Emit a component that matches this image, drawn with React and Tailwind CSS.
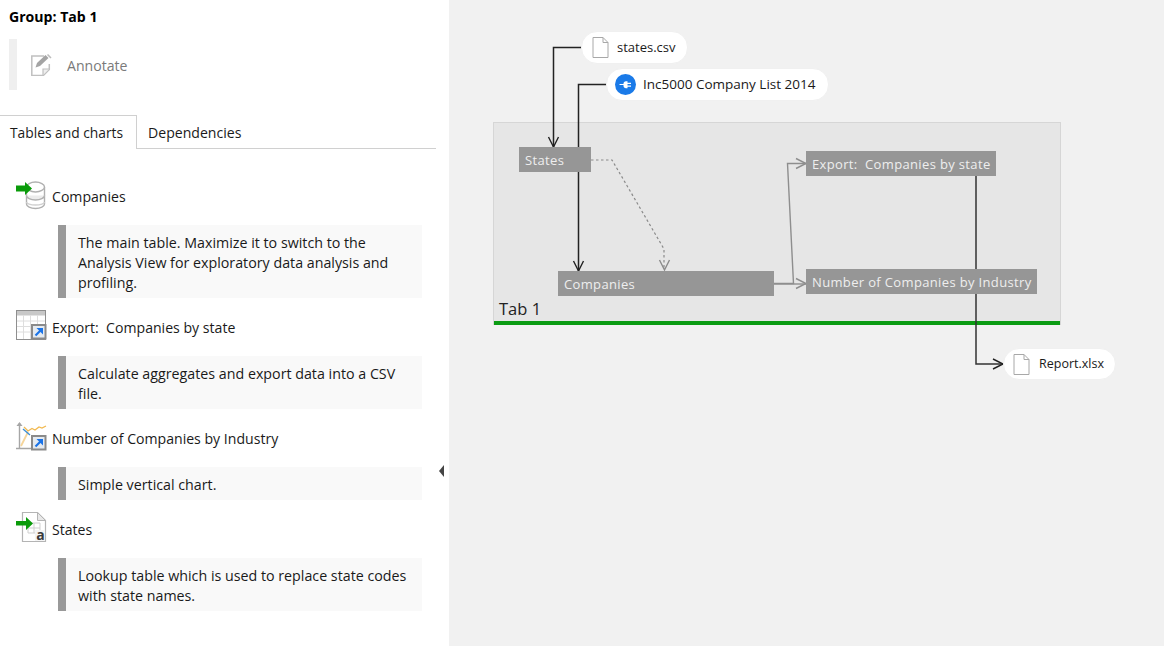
import React from "react";

const F = { fontFamily: '"Open Sans", "Noto Sans", sans-serif' };

function IconDb() {
  return (
    <svg width="30" height="30" viewBox="0 0 30 30" className="overflow-visible shrink-0">
      <g fill="#fff" stroke="#b0b0b0" strokeWidth="1.400">
        <path d="M10.500 6v17c0 2.500 4 4.500 9 4.500s9-2 9-4.500V6" />
        <path d="M10.500 14.500c0 2.500 4 4.500 9 4.500s9-2 9-4.500" fill="#ececec" />
        <path d="M10.500 21c0 1.500 4 3 9 3s9-1.500 9-3" fill="none" stroke="#d0d0d0" />
        <path d="M10.500 6c0-2.500 4-5 9-5s9 2.500 9 5-4 5-9 5-9-2.500-9-5z" />
      </g>
      <path d="M0 4.500h9V1l7 6.500-7 6.500v-3.500H0z" fill="#0a9b0a" />
    </svg>
  );
}
function LinkBadge({ y }) {
  return (
    <g transform={`translate(15 ${y})`}>
      <rect x="1" y="1" width="13.500" height="13.500" fill="#e4eaf0" stroke="#8a8a8a" strokeWidth="2" />
      <path d="M4.500 11.500l5-5" stroke="#1a73e8" strokeWidth="2.200" fill="none" />
      <path d="M5.500 4h6.500v6.500z" fill="#1a73e8" />
    </g>
  );
}
function IconTable() {
  return (
    <svg width="30" height="30" viewBox="0 2 30 30" className="overflow-visible shrink-0">
      <rect x="0.500" y="0.500" width="29" height="29" fill="#fff" stroke="#8f8f8f" />
      <rect x="1" y="1" width="28" height="4.500" fill="#c8c8c8" />
      <path d="M1 11h28M1 16.500h28M1 22h28M7.500 5v24M14.500 5v24M21.500 5v24" stroke="#dedede" />
      <LinkBadge y={14} />
    </svg>
  );
}
function IconChart() {
  return (
    <svg width="30" height="30" viewBox="0 2 30 30" className="overflow-visible shrink-0">
      <path d="M3.500 2v26M0 27.500h16" stroke="#a6a6a6" strokeWidth="1.400" fill="none" />
      <path d="M0.500 5l3-4 3 4z" fill="#a6a6a6" />
      <path d="M5 25l7-14" stroke="#f6d59b" strokeWidth="1.800" fill="none" />
      <path d="M8 6l4 4 4-2.500 3 1.500 4-3 3 1 4-2" stroke="#f2b94f" strokeWidth="1.300" fill="none" />
      <path d="M7 8l7 6" stroke="#3d8fd6" strokeWidth="1.400" fill="none" />
      <LinkBadge y={14} />
    </svg>
  );
}
function IconLookup() {
  return (
    <svg width="30" height="30" viewBox="0 2 30 30" className="overflow-visible shrink-0">
      <path d="M6.500 0.500h15l8 8v21h-23z" fill="#fff" stroke="#b4b4b4" strokeWidth="1.200" />
      <path d="M21.500 0.500v8h8z" fill="#e8e8e8" stroke="#b4b4b4" />
      <path d="M12 11h12v10H12zM12 16h12M18 11v10" fill="none" stroke="#cfcfcf" />
      <rect x="19" y="18" width="10" height="11" fill="#f4f4f4" />
      <text x="24.500" y="28" fontSize="14" fontWeight="700" fill="#3a3a3a" textAnchor="middle" style={F}>a</text>
      <path d="M0 9h10V5l7 6.500-7 6.500v-4.500H0z" fill="#0a9b0a" />
    </svg>
  );
}
function IconNote() {
  return (
    <svg width="21" height="22" viewBox="0 0 21 22" fill="none" className="shrink-0">
      <path d="M13 2H.800v19.500h11.500l6-6V10" stroke="#c0c0c0" strokeWidth="1.500" />
      <path d="M12 21v-6h6" stroke="#c0c0c0" strokeWidth="1.200" fill="#eeeeee" />
      <path d="M4.500 13.500l1.500-4.500 8.500-8 3 3-8.500 8z" fill="#a4a4a4" />
      <path d="M16.500 .5l3.500 3.500" stroke="#bbbbbb" strokeWidth="1.500" />
    </svg>
  );
}
function FileIcon() {
  return (
    <svg width="17" height="21" viewBox="0 0 17 21" fill="none" className="shrink-0">
      <path d="M1 .5h10l5 5v15H1z" fill="#fff" stroke="#a8a8a8" />
      <path d="M11 .5v5h5" stroke="#a8a8a8" />
    </svg>
  );
}
function PlugIcon() {
  return (
    <svg width="21" height="21" viewBox="0 0 21 21" className="shrink-0">
      <circle cx="10.500" cy="10.500" r="10.500" fill="#1a7ae8" />
      <path d="M4.500 10h4V9.500c0-1 1-2.300 2.500-2.300h1.500v1.500h3.500v1.300h-3.500v1.500h3.500v1.300h-3.500v1.500H11c-1.500 0-2.500-1.300-2.500-2.300V11h-4z" fill="#fff" />
    </svg>
  );
}

const items = [
  { icon: <IconDb />, title: "Companies", note: "The main table. Maximize it to switch to the Analysis View for exploratory data analysis and profiling." },
  { icon: <IconTable />, title: "Export:\u00a0 Companies by state", note: "Calculate aggregates and export data into a CSV file." },
  { icon: <IconChart />, title: "Number of Companies by Industry", note: "Simple vertical chart." },
  { icon: <IconLookup />, title: "States", note: "Lookup table which is used to replace state codes with state names." },
];

function Pill({ left, top, w, h, children }) {
  return (
    <div className="absolute flex items-center rounded-[16px] bg-white border border-[#f0f0f0] text-[13.5px] text-[#1a1a1a]" style={{ left, top, width: w, height: h }}>
      {children}
    </div>
  );
}
function Node({ left, top, w, label }) {
  return (
    <div className="absolute h-[25px] bg-[#969696] text-[#eeeeee] text-[13px] leading-[26px] pl-[6px] tracking-[0.35px] whitespace-pre" style={{ left, top, width: w }}>
      {label}
    </div>
  );
}
const Head = ({ x, y, dir, c }) => {
  const d = dir === "down"
    ? `M${x - 5} ${y - 10}L${x} ${y}L${x + 5} ${y - 10}`
    : `M${x - 10} ${y - 5}L${x} ${y}L${x - 10} ${y + 5}`;
  return <path d={d} stroke={c} strokeWidth="1.400" fill="none" />;
};

export default function App() {
  return (
    <div className="flex w-[1164px] h-[646px] overflow-hidden bg-[#f1f1f1]" style={F}>
      <aside className="relative w-[449px] h-full shrink-0 bg-white text-[14px] text-[#1a1a1a]">
        <h1 className="pl-[9px] pt-[7px] h-[39px] text-[14.1px] leading-[20px] font-bold text-black">Group: Tab 1</h1>
        <div className="ml-[9px] h-[51px] w-[415px] flex items-center border-l-[8px] border-[#efefef] pl-[14px]">
          <IconNote />
          <span className="ml-[15px] text-[14.100px] pt-[2px] text-[#7a7a7a]">Annotate</span>
        </div>
        <div className="mt-[25px] h-[34px] w-[436px] flex border-b border-[#d0d0d0]">
          <div className="w-[137px] h-[34px] border-t border-r border-[#d0d0d0] bg-white pl-[10px] text-[13.800px] leading-[33px]">Tables and charts</div>
          <div className="pl-[11px] pt-[1px] leading-[33px] text-[14.100px]">Dependencies</div>
        </div>
        <ul className="pt-[32px] pl-[16px] w-[422px]">
          {items.map((it) => (
            <li key={it.title} className="mb-[14px]">
              <div className="flex items-center h-[30px]">
                {it.icon}
                <span className="ml-[6px] pt-[2px] whitespace-pre text-[14.100px]">{it.title}</span>
              </div>
              <p className="mt-[14px] ml-[42px] border-l-[8px] border-[#999999] bg-[#f9f9f9] pl-[12px] pr-[12px] pt-[8px] pb-[5px] leading-[20px] text-[14.250px]">{it.note}</p>
            </li>
          ))}
        </ul>
        <div className="absolute left-[439px] top-[465px] w-0 h-0 border-y-[6px] border-y-transparent border-r-[5px] border-r-[#444]" />
      </aside>
      <main className="relative flex-1 h-full">
        {/* canvas coordinates: offset by the 449px side panel */}
        <div className="absolute left-[44px] top-[122px] w-[568px] h-[203px] bg-[#e6e6e6] border border-[#d6d6d6] border-b-0">
          <div className="absolute left-[5px] bottom-[5px] text-[16.500px] leading-[22px] text-[#222]">Tab 1</div>
          <div className="absolute left-0 right-0 bottom-0 h-[4px] bg-[#0b9b13]" />
        </div>
        <svg className="absolute left-0 top-0" width="715" height="646" viewBox="449 0 715 646" fill="none">
          <path d="M581 47.500H553.500V147" stroke="#222" strokeWidth="1.500" />
          <Head x={553.5} y={147} dir="down" c="#222" />
          <path d="M606 84.500H578.500V271" stroke="#222" strokeWidth="1.500" />
          <Head x={578.5} y={271} dir="down" c="#222" />
          <path d="M591 160H612L664 249V270" stroke="#8a8a8a" strokeWidth="1.200" strokeDasharray="2.500 2.500" />
          <Head x={664.5} y={270} dir="down" c="#8a8a8a" />
          <path d="M774 283.500H793.500L787.500 163.500H806" stroke="#8e8e8e" strokeWidth="1.400" />
          <Head x={806} y={163.5} dir="right" c="#8e8e8e" />
          <path d="M774 284H806" stroke="#8e8e8e" strokeWidth="1.400" />
          <Head x={806} y={283.5} dir="right" c="#8e8e8e" />
          <path d="M976 176V364H1003" stroke="#333" strokeWidth="1.500" />
          <Head x={1003} y={364} dir="right" c="#222" />
        </svg>
        <Node left={70} top={147} w={72} label="States" />
        <Node left={109} top={271} w={216} label="Companies" />
        <Node left={357} top={151} w={190} label="Export:  Companies by state" />
        <Node left={357} top={269} w={231} label="Number of Companies by Industry" />
        <Pill left={132} top={31} w={107} h={33}>
          <span className="ml-[10px] flex"><FileIcon /></span>
          <span className="ml-[8px] text-[13px]">states.csv</span>
        </Pill>
        <Pill left={157} top={68} w={223} h={33}>
          <span className="ml-[8px] flex"><PlugIcon /></span>
          <span className="ml-[7px]">Inc5000 Company List 2014</span>
        </Pill>
        <Pill left={554} top={348} w={113} h={32}>
          <span className="ml-[9px] flex"><FileIcon /></span>
          <span className="ml-[9px] text-[12.500px]">Report.xlsx</span>
        </Pill>
      </main>
    </div>
  );
}
